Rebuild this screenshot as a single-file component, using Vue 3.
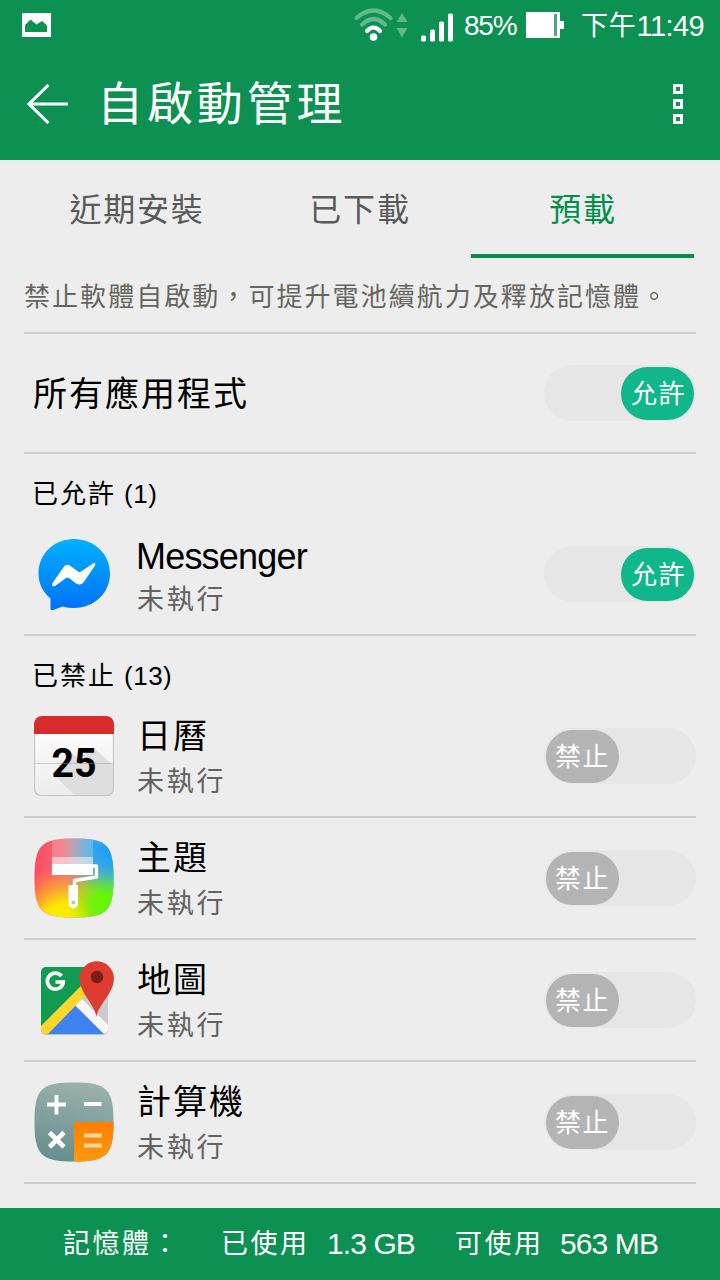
<template>
  <div class="screen">
    <header class="app-header">
      <div class="status-bar">
        <svg class="picture-icon" width="30" height="25" viewBox="0 0 30 25">
          <rect width="29" height="24" fill="#fff" />
          <path d="M3 19V12L8.500 6.500L14.500 11.500L20 8L25 12.500V19Z" fill="#0c9152" />
        </svg>
        <svg class="signal-icons" width="104" height="36" viewBox="0 3 104 36">
          <g fill="none" stroke-linecap="round">
            <path d="M2.500 15Q19.500 0 36.500 15" stroke="#63b78f" stroke-width="4.200" />
            <path d="M8 21.500Q19.500 10.500 31 21.500" stroke="#63b78f" stroke-width="4.200" />
            <path d="M13 28Q19.500 21 26 28" stroke="#fff" stroke-width="4.200" />
          </g>
          <circle cx="19.500" cy="34" r="3.800" fill="#fff" />
          <path d="M48 10L53.500 19H42.500ZM42.500 25H53.500L48 34.500Z" fill="#63b78f" />
          <g fill="#fff">
            <rect x="67" y="32.500" width="5" height="6" rx="1.500" />
            <rect x="76" y="26.500" width="5" height="12" rx="1.500" />
            <rect x="85" y="18.500" width="5" height="20" rx="1.500" />
            <rect x="94" y="10.500" width="5" height="28" rx="1.500" />
          </g>
        </svg>
        <span class="battery-text">85%</span>
        <svg class="battery-icon" width="39" height="26" viewBox="0 0 39 26">
          <path d="M0 0H34V9H38V17H34V26H0Z" fill="#fff" />
          <rect x="28" y="2" width="3" height="22" fill="#4da87e" />
        </svg>
        <span class="clock">下午<span class="clock-num">11:49</span></span>
      </div>
      <div class="title-bar">
        <svg class="back-icon" width="42" height="40" viewBox="0 0 42 40">
          <path d="M21.500 1L2 20L21.500 39M2 20H41" fill="none" stroke="#fff" stroke-width="3" />
        </svg>
        <h1>自啟動管理</h1>
        <div class="menu">
          <i></i>
          <i></i>
          <i></i>
        </div>
      </div>
    </header>

    <nav class="tabs">
      <button
        v-for="tab in tabs"
        :key="tab"
        :class="{ active: tab === activeTab }"
        @click="activeTab = tab"
      >{{ tab }}</button>
    </nav>

    <main class="content">
      <p class="desc">禁止軟體自啟動，可提升電池續航力及釋放記憶體。</p>

      <div class="all-apps">
        <span class="all-label">所有應用程式</span>
        <button class="toggle" :class="{ on: allAllowed }" @click="allAllowed = !allAllowed">
          <span class="knob">{{ allAllowed ? '允許' : '禁止' }}</span>
        </button>
      </div>

      <section v-for="group in groups" :key="group.title">
        <h2>{{ group.title }}<span class="count">({{ group.count }})</span></h2>
        <div v-for="app in group.apps" :key="app.name" class="app-row">
          <svg v-if="app.icon === 'messenger'" class="app-icon" viewBox="0 0 80 80">
            <defs>
              <linearGradient id="msg" x1="0" y1="0" x2="0" y2="1">
                <stop offset="0" stop-color="#00b2fd" />
                <stop offset="1" stop-color="#0070fb" />
              </linearGradient>
            </defs>
            <path d="M40 5C20 5 4.500 20 4.500 39.500C4.500 50 9 58 16.500 64.500V74.500Q16.500 77 19 76L28.500 72.500Q34 74 40 74C60 74 76 59 76 39.500C76 20 60 5 40 5Z" fill="url(#msg)" />
            <path d="M18.500 49L30 32.500Q33 29.500 36.500 32L44 37.500Q45.500 38.500 47 37.500L59 29.500Q62.500 28 61 31.500L49.500 48.500Q46.500 52 42 49.500L35 44Q33.500 43 32 44L21 52Q17 53 18.500 49Z" fill="#fffefa" />
          </svg>

          <svg v-else-if="app.icon === 'calendar'" class="app-icon" viewBox="0 0 80 80">
            <defs>
              <clipPath id="cal-clip"><rect x="0" y="0" width="80" height="80" rx="8" /></clipPath>
              <linearGradient id="cal" x1="0" y1="0" x2="0" y2="1">
                <stop offset="0" stop-color="#fff" />
                <stop offset="1" stop-color="#ececec" />
              </linearGradient>
            </defs>
            <g clip-path="url(#cal-clip)">
              <rect width="80" height="80" fill="url(#cal)" />
              <path d="M36 35L44 42L60 32L80 50V80H41L21 60Z" fill="#dedede" />
              <rect width="80" height="18" fill="#d82b2c" />
              <text x="40" y="60.500" class="cal-day" textLength="45" lengthAdjust="spacingAndGlyphs">25</text>
              <path d="M0 47.500H80" stroke="#999" stroke-opacity="0.450" stroke-width="1" />
            </g>
            <path d="M0.500 18V72Q0.500 79.500 8 79.500H72Q79.500 79.500 79.500 72V18" fill="none" stroke="#c5c5c5" stroke-width="1.200" />
          </svg>

          <svg v-else-if="app.icon === 'theme'" class="app-icon" viewBox="0 0 80 80">
            <defs>
              <clipPath id="theme-clip"><path :d="squircle" /></clipPath>
              <radialGradient id="th-blue" cx="78" cy="10" r="48" gradientUnits="userSpaceOnUse">
                <stop offset="0" stop-color="#179cff" />
                <stop offset="0.450" stop-color="#2ea6f0" stop-opacity="0.900" />
                <stop offset="1" stop-color="#4ab8c0" stop-opacity="0" />
              </radialGradient>
              <radialGradient id="th-green" cx="78" cy="66" r="46" gradientUnits="userSpaceOnUse">
                <stop offset="0" stop-color="#5cfb00" />
                <stop offset="0.400" stop-color="#6cf40a" />
                <stop offset="1" stop-color="#a0f000" stop-opacity="0" />
              </radialGradient>
              <radialGradient id="th-yellow" cx="30" cy="84" r="56" gradientUnits="userSpaceOnUse">
                <stop offset="0" stop-color="#fff000" />
                <stop offset="0.350" stop-color="#ffe505" />
                <stop offset="1" stop-color="#ffa020" stop-opacity="0" />
              </radialGradient>
              <linearGradient id="th-base" x1="0" y1="0" x2="1" y2="0">
                <stop offset="0" stop-color="#ff4a62" />
                <stop offset="0.350" stop-color="#f06a75" />
                <stop offset="0.650" stop-color="#b58aa5" />
                <stop offset="1" stop-color="#2fc494" />
              </linearGradient>
            </defs>
            <g clip-path="url(#theme-clip)">
              <rect width="80" height="80" fill="url(#th-base)" />
              <rect width="80" height="80" fill="url(#th-yellow)" />
              <rect width="80" height="80" fill="url(#th-green)" />
              <rect width="80" height="80" fill="url(#th-blue)" />
              <rect x="18" y="0" width="41" height="19" fill="#fff" opacity="0.200" />
              <rect x="18" y="19" width="41" height="7" fill="#fff" opacity="0.600" />
            </g>
            <rect x="18" y="26" width="41" height="11" fill="#fff" />
            <path d="M58 28H62.500V39L40.500 42.500V48" fill="none" stroke="#fff" stroke-width="3.400" stroke-linejoin="round" />
            <path d="M34.500 47H44V65.500A4.700 4.700 0 0 1 34.500 65.500Z" fill="#fff" />
            <circle cx="39.300" cy="64.500" r="2" fill="#b9c2b4" />
          </svg>

          <svg v-else-if="app.icon === 'maps'" class="app-icon" viewBox="0 0 80 80">
            <defs>
              <clipPath id="map-clip"><rect x="7" y="7" width="67" height="67" rx="5" /></clipPath>
            </defs>
            <rect x="7" y="8" width="67" height="67" rx="5" fill="#bdbdbd" />
            <g clip-path="url(#map-clip)">
              <rect x="7" y="7" width="67" height="67" fill="#c9cbcd" />
              <path d="M7 7H60V20L7 72Z" fill="#109b50" />
              <path d="M11 75L41 45L71 75Z" fill="#3f83f2" />
              <path d="M46 37L79 70L72 76L40 44Z" fill="#f7f7f7" />
              <path d="M3 70L48 25L56 31L10 78Z" fill="#ffd62b" />
            </g>
            <path d="M62.500 57C61 44 45.500 34 45.500 17.500A17.300 17.500 0 0 1 80 17.500C80 34 64 44 62.500 57Z" fill="#df3c30" />
            <circle cx="63" cy="17" r="6.200" fill="#7a1d19" />
            <path d="M27.500 16A8 8 0 1 0 29.300 22H21.500" fill="none" stroke="#fff" stroke-width="3.600" />
          </svg>

          <svg v-else class="app-icon" viewBox="0 0 80 80">
            <defs>
              <clipPath id="calc-clip"><path :d="squircle" /></clipPath>
              <linearGradient id="calc" x1="0.500" y1="0" x2="0.300" y2="1">
                <stop offset="0" stop-color="#9ab1ac" />
                <stop offset="1" stop-color="#648e8e" />
              </linearGradient>
              <linearGradient id="calc-eq" x1="0" y1="0" x2="0" y2="1">
                <stop offset="0" stop-color="#ff7e00" />
                <stop offset="1" stop-color="#ff9a0c" />
              </linearGradient>
            </defs>
            <g clip-path="url(#calc-clip)">
              <rect width="80" height="80" fill="url(#calc)" />
              <rect x="40" y="40" width="40" height="41" fill="url(#calc-eq)" />
            </g>
            <g stroke="#fff" stroke-width="3.800">
              <path d="M13 22.500H32M22.500 13V32.500M50 22H67.500" />
              <path d="M15.500 50.500L30 65M30 50.500L15.500 65" stroke-width="4.600" />
              <path d="M50 53.500H67.500M50 63.500H67.500" stroke="#ffd79c" />
            </g>
          </svg>

          <div class="app-info">
            <span class="app-name" :class="{ latin: app.icon === 'messenger' }">{{ app.name }}</span>
            <span class="app-state">未執行</span>
          </div>
          <button class="toggle" :class="{ on: app.allowed }" @click="app.allowed = !app.allowed">
            <span class="knob">{{ app.allowed ? '允許' : '禁止' }}</span>
          </button>
        </div>
      </section>
    </main>

    <footer class="memory-bar">
      <span class="mem-label">記憶體：</span>
      <span class="mem-used">已使用</span>
      <span class="mem-value used">1.3 GB</span>
      <span class="mem-free">可使用</span>
      <span class="mem-value free">563 MB</span>
    </footer>
  </div>
</template>

<script setup>
import { ref } from 'vue'

const squircle = 'M40 0.500C73 0.500 79.500 7 79.500 40C79.500 73 73 79.500 40 79.500C7 79.500 0.500 73 0.500 40C0.500 7 7 0.500 40 0.500Z'

const tabs = ['近期安裝', '已下載', '預載']
const activeTab = ref('預載')
const allAllowed = ref(true)

const groups = ref([
  {
    title: '已允許',
    count: 1,
    apps: [{ name: 'Messenger', icon: 'messenger', allowed: true }]
  },
  {
    title: '已禁止',
    count: 13,
    apps: [
      { name: '日曆', icon: 'calendar', allowed: false },
      { name: '主題', icon: 'theme', allowed: false },
      { name: '地圖', icon: 'maps', allowed: false },
      { name: '計算機', icon: 'calculator', allowed: false }
    ]
  }
])
</script>

<style>
body {
  margin: 0;
  background: #ededed;
}
</style>

<style scoped>
.screen {
  display: flex;
  flex-direction: column;
  width: 720px;
  height: 1280px;
  overflow: hidden;
  background: #ededed;
  font-family: 'Liberation Sans', 'Noto Sans CJK TC', sans-serif;
  color: #000;
  white-space: nowrap;
}

svg {
  display: block;
  flex: none;
}

button {
  border: none;
  padding: 0;
  background: none;
  font-family: inherit;
  cursor: pointer;
}

.app-header {
  height: 160px;
  flex: none;
  background: #0c9152;
  color: #fff;
}

.status-bar {
  display: flex;
  align-items: center;
  height: 50px;
  padding-left: 22px;
  line-height: 50px;
}

.signal-icons {
  margin: -3px 0 0 302px;
  overflow: visible;
}

.battery-text {
  width: 64px;
  padding: 2px 0 0 6px;
  box-sizing: border-box;
  font-size: 28px;
  letter-spacing: -1.2px;
}

.battery-icon {
  margin-left: 4px;
}

.clock {
  display: flex;
  margin-left: 16px;
  padding-top: 1px;
  font-size: 27px;
  letter-spacing: 0.8px;
}

.clock-num {
  font-size: 29px;
  letter-spacing: -0.6px;
}

.title-bar {
  display: flex;
  align-items: center;
  height: 108px;
  padding-left: 27px;
}

.title-bar h1 {
  margin: 0 0 0 28px;
  font-size: 46px;
  font-weight: 400;
  line-height: 60px;
  letter-spacing: 3.9px;
}

.menu {
  display: flex;
  flex-direction: column;
  gap: 5px;
  margin: 0 37px 0 auto;
}

.menu i {
  width: 4px;
  height: 4px;
  border: 3px solid #fff;
}

.tabs {
  display: grid;
  grid-template-columns: repeat(3, 223px);
  height: 98px;
  flex: none;
  padding-left: 25px;
  border-top: 1px solid #d3f5e4;
  box-sizing: border-box;
}

.tabs button {
  padding: 0 0 2px 1px;
  border-bottom: 4px solid transparent;
  font-size: 32px;
  letter-spacing: 1.8px;
  color: #5a5a5a;
}

.tabs button.active {
  border-bottom-color: #028f49;
  color: #028f49;
}

.content {
  flex: 1;
  padding: 0 24px;
}

.desc {
  margin: 0;
  height: 76px;
  box-sizing: border-box;
  border-bottom: 2px solid #cecece;
  font-size: 26px;
  line-height: 78px;
  letter-spacing: 2.05px;
  color: #65655f;
}

.all-apps {
  display: flex;
  align-items: center;
  justify-content: space-between;
  height: 120px;
  box-sizing: border-box;
  border-bottom: 2px solid #cecece;
  padding-left: 9px;
}

.all-label {
  padding-bottom: 3px;
  font-size: 34px;
  letter-spacing: 2px;
}

h2 {
  display: flex;
  margin: 0;
  height: 60px;
  box-sizing: border-box;
  padding: 20px 0 0 8px;
  font-size: 26px;
  font-weight: 400;
  line-height: 41px;
  letter-spacing: 2px;
}

.count {
  margin-left: 8px;
  letter-spacing: 0.5px;
}

.app-row {
  display: flex;
  align-items: center;
  height: 122px;
  box-sizing: border-box;
  border-bottom: 2px solid #cecece;
  padding-left: 10px;
}

.app-icon {
  width: 80px;
  height: 80px;
}

.cal-day {
  font-family: Roboto, sans-serif;
  font-size: 40px;
  font-weight: 700;
  text-anchor: middle;
}

.app-info {
  display: flex;
  flex-direction: column;
  margin: 7px 0 0 23px;
}

.app-name {
  height: 44px;
  font-size: 34px;
  line-height: 40px;
  letter-spacing: 2px;
}

.app-name.latin {
  margin-left: -1px;
  font-size: 36px;
  line-height: 45px;
  letter-spacing: -0.8px;
}

.app-state {
  height: 44px;
  font-size: 27px;
  line-height: 44px;
  letter-spacing: 2.8px;
  color: #626262;
}

.toggle {
  display: flex;
  align-items: center;
  flex: none;
  width: 152px;
  height: 56px;
  margin-left: auto;
  box-sizing: border-box;
  padding: 0 2px;
  border-radius: 28px;
  background: #e6e6e6;
}

.toggle.on {
  justify-content: flex-end;
}

.knob {
  width: 73px;
  height: 53px;
  border-radius: 27px;
  background: #b4b4b4;
  color: #fff;
  font-size: 26px;
  line-height: 55px;
  letter-spacing: 1.5px;
  text-align: center;
}

.toggle.on .knob {
  padding-left: 2px;
  box-sizing: border-box;
  background: #0fb78a;
}

.memory-bar {
  display: flex;
  align-items: center;
  height: 72px;
  flex: none;
  padding-left: 63px;
  background: #0c9152;
  color: #fff;
  font-size: 27px;
  line-height: 72px;
  letter-spacing: 2.5px;
}

.mem-label,
.mem-used {
  width: 158px;
}

.mem-used,
.mem-free {
  width: 106px;
}

.mem-free {
  width: 105px;
}

.mem-value {
  font-size: 30px;
  letter-spacing: -0.9px;
}

.mem-value.used {
  width: 128px;
}
</style>
